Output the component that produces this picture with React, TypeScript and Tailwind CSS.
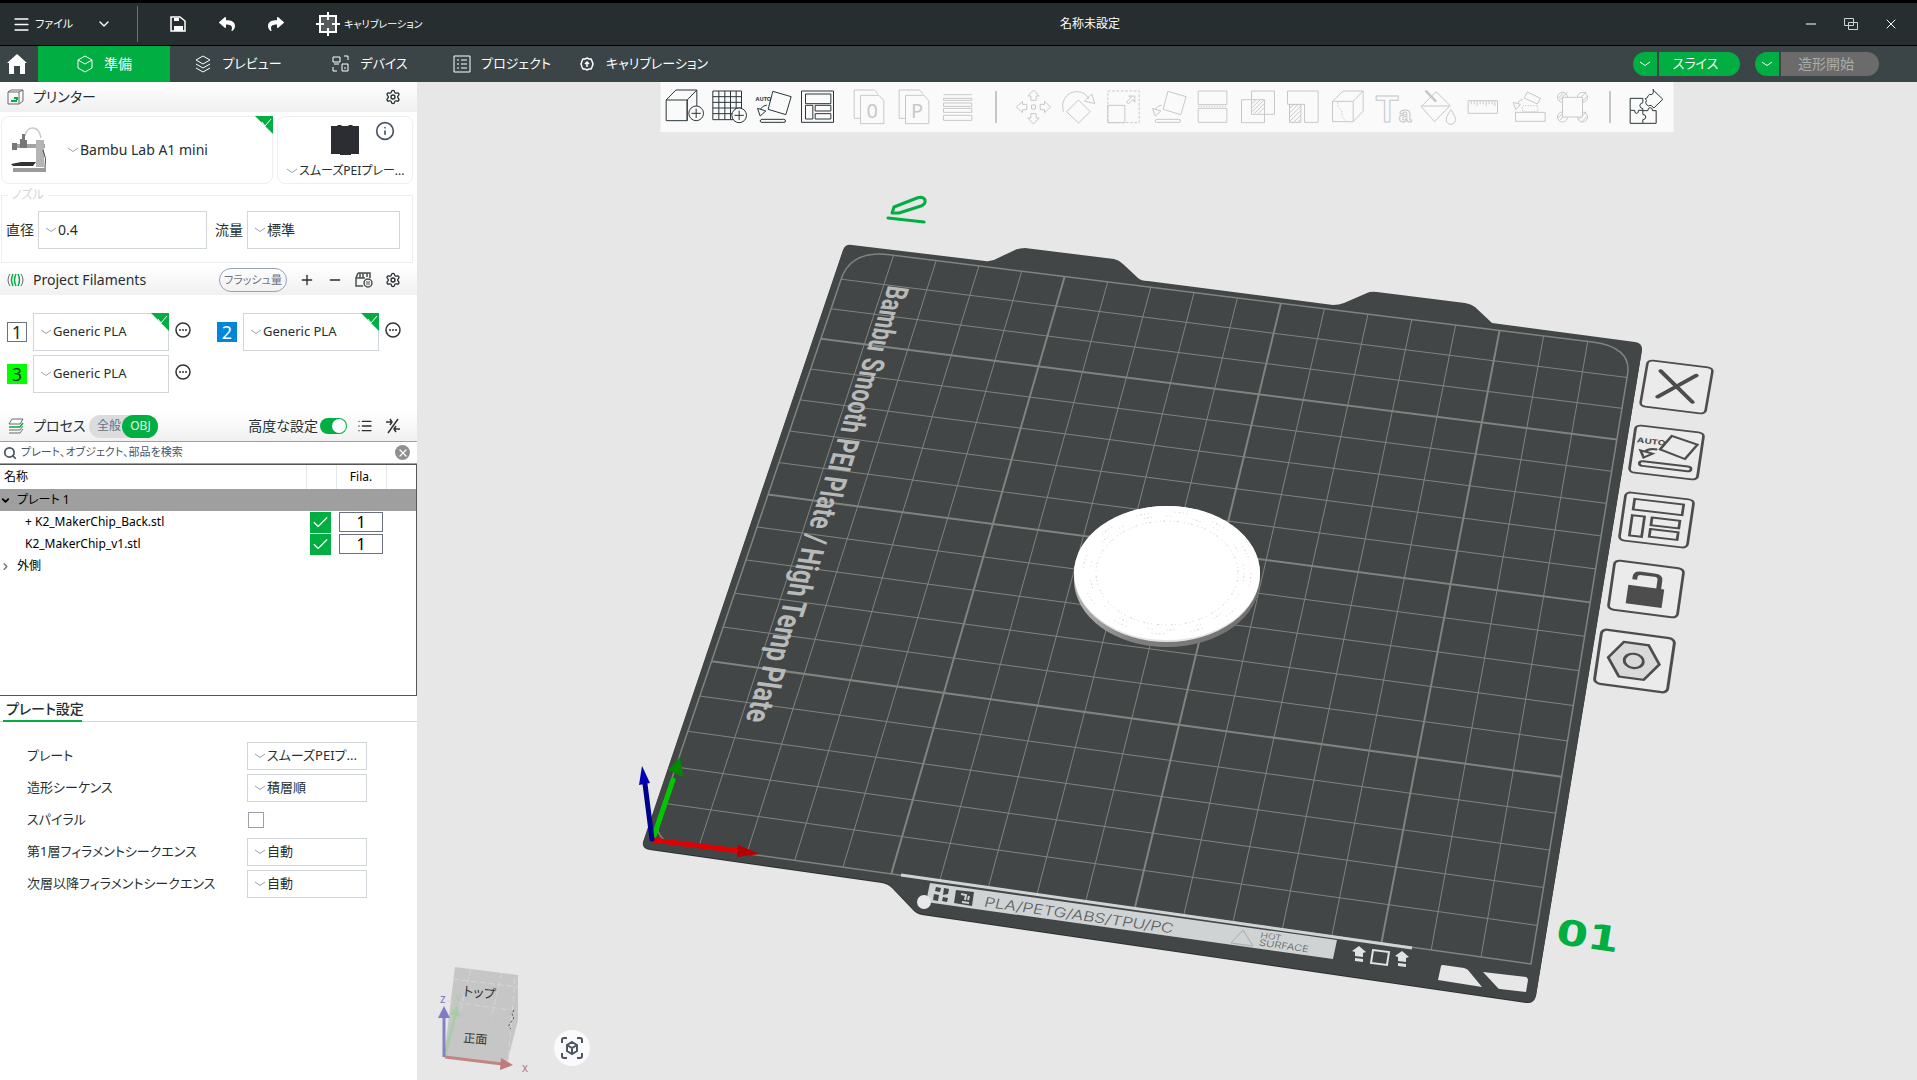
import { useState } from 'react';
import type { ReactNode } from 'react';
import { Check, ChevronDown, ChevronRight, Info, List, Menu, Minus, Plus, Search, Settings, X } from 'lucide-react';
import { FaReply, FaShare } from 'react-icons/fa';

type Point = [number, number];

// Corners of the 180 x 180 mm print bed in view coordinates
const BED = 180;
const FRONT_LEFT: Point = [651, 840];
const FRONT_RIGHT: Point = [1531, 964];
const BACK_RIGHT: Point = [1632, 347];
const BACK_LEFT: Point = [851, 250];

// Perspective mapping from bed millimetres to the view
function createProjection(p0: Point, p1: Point, p2: Point, p3: Point) {
  const dx1 = p1[0] - p2[0];
  const dy1 = p1[1] - p2[1];
  const dx2 = p3[0] - p2[0];
  const dy2 = p3[1] - p2[1];
  const sx = p0[0] - p1[0] + p2[0] - p3[0];
  const sy = p0[1] - p1[1] + p2[1] - p3[1];
  const den = dx1 * dy2 - dx2 * dy1;
  const g = (sx * dy2 - dx2 * sy) / den;
  const h = (dx1 * sy - sx * dy1) / den;

  return (x: number, y: number): Point => {
    const u = x / BED;
    const v = y / BED;
    const w = g * u + h * v + 1;
    return [
      ((p1[0] - p0[0] + g * p1[0]) * u + (p3[0] - p0[0] + h * p3[0]) * v + p0[0]) / w,
      ((p1[1] - p0[1] + g * p1[1]) * u + (p3[1] - p0[1] + h * p3[1]) * v + p0[1]) / w,
    ];
  };
}

const project = createProjection(FRONT_LEFT, FRONT_RIGHT, BACK_RIGHT, BACK_LEFT);

function line(x1: number, y1: number, x2: number, y2: number) {
  return `M${project(x1, y1).join(' ')}L${project(x2, y2).join(' ')}`;
}

// Local frame of the bed at a point, four units to the millimetre
function bedMatrix(x: number, y: number, down = false) {
  const o = project(x, y);
  const right = down ? project(x, y - 1) : project(x + 1, y);
  const up = down ? project(x + 1, y) : project(x, y + 1);
  const values = [right[0] - o[0], right[1] - o[1], o[0] - up[0], o[1] - up[1]].map((n) => n / 4);
  return `matrix(${[...values, o[0], o[1]].join(' ')})`;
}

function Chevron({ className = 'text-gray-400' }: { className?: string }) {
  return (
    <svg viewBox="0 0 12 6" className={`h-[6px] w-3 shrink-0 ${className}`} fill="none" stroke="currentColor">
      <path d="M1 1l5 3.5L11 1" />
    </svg>
  );
}

interface DropdownProps {
  id: string;
  label: string;
  value: string;
  className?: string;
}

function Dropdown({ id, label, value, className = '' }: DropdownProps) {
  return (
    <div className={`flex items-center gap-px ${className}`}>
      <Chevron />
      <select id={id} aria-label={label} className="min-w-0 flex-1 appearance-none bg-transparent outline-none">
        <option>{value}</option>
      </select>
    </div>
  );
}

function CornerBadge() {
  return (
    <svg viewBox="0 0 18 18" className="absolute -top-px -right-px size-[18px]">
      <path d="M0 0h18v18z" fill="#00ae42" />
      <path d="M7 6l3 4 6-7" fill="none" stroke="#fff" />
    </svg>
  );
}

function TitleBar() {
  return (
    <header className="flex h-[46px] shrink-0 items-center border-t-[3px] border-b border-black bg-[#262e30] text-white">
      <div className="flex w-[137px] items-center">
        <button className="ml-3 flex items-center gap-1 text-[11px]">
          <Menu className="size-[19px]" strokeWidth={2} />
          ファイル
        </button>
        <button aria-label="メニューを開く" className="ml-auto pr-[25px]">
          <ChevronDown className="size-4" strokeWidth={2} />
        </button>
      </div>
      <div className="h-9 w-px bg-gray-500" />
      <div className="flex w-[490px] items-center pl-8">
        <button aria-label="保存" className="w-[49px]">
          <svg viewBox="0 0 16 16" className="size-4" fill="none" stroke="#fff" strokeWidth="1.5">
            <path d="M1 1h9l5 4v10H1z" />
            <path d="M4 2h5v3H4zM4 10h9v5H4z" fill="#fff" stroke="none" />
          </svg>
        </button>
        <button aria-label="元に戻す" className="w-[49px]">
          <FaReply className="size-4" />
        </button>
        <button aria-label="やり直す" className="w-12">
          <FaShare className="size-4" />
        </button>
        <button className="flex items-center gap-1 text-[10px]">
          <svg viewBox="0 0 24 24" className="size-6" fill="none" stroke="#fff" strokeWidth="2">
            <rect x="4" y="4" width="16" height="16" fill="#555b5c" />
            <path d="M12 0v8M12 16v8M0 12h8M16 12h8" />
          </svg>
          キャリブレーション
        </button>
      </div>
      <h1 className="flex-1 pl-[432px] text-xs">名称未設定</h1>
      <div className="flex items-center gap-6 pr-[18px]">
        <button aria-label="最小化">
          <Minus className="size-4" strokeWidth={1.5} />
        </button>
        <button aria-label="元のサイズに戻す">
          <svg viewBox="0 0 16 14" className="h-[14px] w-4" fill="none" stroke="#cfd3d4">
            <path d="M1.5 1.5h9v7h-9zM5.5 5.5h9v7h-9z" />
          </svg>
        </button>
        <button aria-label="閉じる">
          <X className="size-4" strokeWidth={1.5} />
        </button>
      </div>
    </header>
  );
}

const TABS: { name: string; icon: ReactNode }[] = [
  {
    name: '準備',
    icon: <path d="M9 1l7 4v8l-7 4-7-4V5zM2 5l7 4 7-4" />,
  },
  {
    name: 'プレビュー',
    icon: <path d="M9 1l7 4-7 4-7-4zM2 9l7 4 7-4M2 13l7 4 7-4" />,
  },
  {
    name: 'デバイス',
    icon: <path d="M1 2h7v5H1zM2 9h5M12 1h4v4M1 12v4h4M10 9h6v7h-6zM13 12v2" />,
  },
  {
    name: 'プロジェクト',
    icon: <path d="M1 1h16v16H1zM4 5h2M8 5h6M4 9h2M8 9h6M4 13h2M8 13h6" />,
  },
  {
    name: 'キャリブレーション',
    icon: (
      <path
        d="M9 3l2 1h2l1 2 1 3-1 3-1 2h-2l-2 1-2-1H5l-1-2-1-3 1-3 1-2h2zM9 12V7M7 9l2-2 2 2"
        strokeWidth="1.5"
      />
    ),
  },
];

function TabBar() {
  return (
    <nav className="flex h-9 shrink-0 items-center bg-[#3b4446] text-[13px] text-white">
      <button aria-label="ホーム" className="flex w-[38px] justify-center pr-1">
        <svg viewBox="0 0 20 20" className="size-5" fill="#fff">
          <path d="M10 0l10 9h-2v11h-5v-8H7v8H2V9H0z" />
        </svg>
      </button>
      {TABS.map((tab, i) => (
        <button
          key={tab.name}
          className={`flex h-full min-w-[132px] items-center justify-center gap-[10px] px-2 ${i === 0 ? 'bg-[#00ae42] text-sm' : 'pl-3'}`}
        >
          <svg viewBox="0 0 18 18" className="size-[18px] shrink-0" fill="none" stroke="#fff">
            {tab.icon}
          </svg>
          {tab.name}
        </button>
      ))}
      <div className="ml-auto flex h-6 gap-[15px] pr-[38px]">
        <div className="flex gap-[2px]">
          <button aria-label="スライスのオプション" className="flex w-6 items-center justify-center rounded-l-full bg-[#00ae42]">
            <Chevron className="text-white" />
          </button>
          <button className="w-[81px] rounded-r-full bg-[#00ae42] pr-2">スライス</button>
        </div>
        <div className="flex gap-[2px]">
          <button aria-label="造形のオプション" className="flex w-6 items-center justify-center rounded-l-full bg-[#00ae42]">
            <Chevron className="text-white" />
          </button>
          <button className="w-[98px] rounded-r-full bg-[#6b6b6b] pr-2 text-sm text-[#acacac]">造形開始</button>
        </div>
      </div>
    </nav>
  );
}

function SectionHeader({ icon, title, children }: { icon: ReactNode; title: string; children?: ReactNode }) {
  return (
    <div className="flex h-[30px] shrink-0 items-center bg-gradient-to-b from-white to-[#f0f0f0] pr-4 pl-[7px] text-sm">
      <svg viewBox="0 0 18 16" className="mr-2 h-4 w-[18px]" fill="none" stroke="#6b6b6b">
        {icon}
      </svg>
      <h2>{title}</h2>
      {children}
    </div>
  );
}

function PrinterSection() {
  return (
    <section>
      <SectionHeader
        title="プリンター"
        icon={
          <>
            <path d="M1 3h11v12H1zM1 3l3-2h12v11l-4 3M12 3l4-2" />
            <path d="M4 12h6M7 9h3v2" stroke="#00ae42" strokeWidth="2" />
          </>
        }
      >
        <button aria-label="プリンター設定" className="ml-auto">
          <Settings className="size-4" strokeWidth={2} />
        </button>
      </SectionHeader>

      <div className="flex gap-1 pt-1 pr-1 pl-px">
        <div className="relative flex h-[68px] w-[272px] shrink-0 items-center rounded-lg border border-[#eee] pl-[9px]">
          <svg viewBox="0 0 36 48" className="h-12 w-9">
            <path d="M14 10C16-1 28-1 30 12" fill="none" stroke="#c8c8c8" strokeWidth="1.5" />
            <path d="M1 18h33v4H1z" fill="#a3a3a3" />
            <path d="M11 8h3v6h2v8H9v-9h2zM1 17h5v7H1z" fill="#777" />
            <path d="M25 14h8v27h-8z" fill="#b4b4b4" />
            <path d="M32 24q4 8 2 18" fill="none" stroke="#444" />
            <path d="M0 38l10-2h15l-3 4H2z" fill="#333" />
            <path d="M2 42h33v4H2z" fill="#9a9a9a" />
          </svg>
          <Dropdown id="printer" label="プリンター" value="Bambu Lab A1 mini" className="ml-5 flex-1 text-sm" />
          <CornerBadge />
        </div>
        <div className="relative flex h-[68px] min-w-0 flex-1 flex-col items-center justify-between rounded-lg border border-[#eee] pt-2 pb-1">
          <svg viewBox="0 0 28 31" className="h-[31px] w-7">
            <path d="M0 1h6l1-1h3l1 1h6l1-1h3l1 1h6v28h-8v1H9v-1H0z" fill="#2c2d33" />
          </svg>
          <button aria-label="プレート情報" className="absolute top-1 right-[17px]">
            <Info className="size-5 text-gray-600" strokeWidth={2} />
          </button>
          <Dropdown id="bed" label="ベッドの種類" value="スムーズPEIプレー..." className="w-full pl-2 text-xs" />
        </div>
      </div>

      <fieldset className="mt-[3px] mr-1 ml-px flex h-[76px] items-center border border-[#eee] pb-[6px] pl-1 text-sm">
        <legend className="ml-[2px] px-1 text-xs text-gray-300">ノズル</legend>
        <label htmlFor="diameter" className="w-8">直径</label>
        <Dropdown id="diameter" label="直径" value="0.4" className="h-[38px] w-[169px] border border-gray-300 pl-1.5" />
        <label htmlFor="flow" className="ml-2 w-8">流量</label>
        <Dropdown id="flow" label="流量" value="標準" className="h-[38px] w-[153px] border border-gray-300 pl-1.5" />
      </fieldset>
    </section>
  );
}

const FILAMENTS = [
  { id: 1, name: 'Generic PLA', swatch: 'border border-gray-500 bg-white', verified: true },
  { id: 2, name: 'Generic PLA', swatch: 'bg-[#0086d6] text-white', verified: true },
  { id: 3, name: 'Generic PLA', swatch: 'bg-[#00ff00]', verified: false },
];

function FilamentSection() {
  return (
    <section className="mt-[2px]">
      <SectionHeader
        title="Project Filaments"
        icon={
          <>
            <path d="M3 2q-4 6 0 12M14 2q4 6 0 12" />
            <path d="M6 2q-3 6 0 12M9 2q-3 6 0 12M11 2q3 6 0 12" stroke="#00ae42" strokeWidth="1.5" />
          </>
        }
      >
        <div className="ml-auto flex items-center gap-3">
          <button className="h-6 w-[68px] rounded-full border border-gray-400 text-[11px] text-gray-500">フラッシュ量</button>
          <button aria-label="フィラメントを追加">
            <Plus className="size-4" strokeWidth={2} />
          </button>
          <button aria-label="フィラメントを削除">
            <Minus className="size-4" strokeWidth={2} />
          </button>
          <button aria-label="AMSと同期">
            <svg viewBox="0 0 18 16" className="h-4 w-[18px]" fill="none" stroke="#4a4f50" strokeWidth="1.5">
              <path d="M3 1h12v5M3 1L1 6v8h7M5 1v5M8 1v5M12 1v4M1 6h9" />
              <circle cx="13" cy="11" r="4" />
              <path d="M11 10h4M15 12h-4" strokeWidth="1" />
            </svg>
          </button>
          <button aria-label="フィラメント設定">
            <Settings className="size-4" strokeWidth={2} />
          </button>
        </div>
      </SectionHeader>

      <ul className="grid grid-cols-[210px_1fr] gap-y-1 pt-[18px] pb-[18px] pl-[7px]">
        {FILAMENTS.map((filament) => (
          <li key={filament.id} className="flex items-center">
            <span className={`flex size-5 items-center justify-center text-lg ${filament.swatch}`}>{filament.id}</span>
            <div className="relative ml-1.5 h-[38px] w-[136px] border border-gray-300 text-[13px]">
              <Dropdown
                id={`filament-${filament.id}`}
                label={`フィラメント ${filament.id}`}
                value={filament.name}
                className="h-full pl-1.5"
              />
              {filament.verified && <CornerBadge />}
            </div>
            <button aria-label="その他" className="ml-1.5 pb-1">
              <svg viewBox="0 0 16 16" className="size-4" fill="none" stroke="#333">
                <circle cx="8" cy="8" r="7" strokeWidth="1.5" />
                <path d="M4 8h2M7 8h2M10 8h2" strokeWidth="1.5" />
              </svg>
            </button>
          </li>
        ))}
      </ul>
    </section>
  );
}

const OBJECTS = ['+ K2_MakerChip_Back.stl', 'K2_MakerChip_v1.stl'];

function ProcessSection() {
  const [advanced, setAdvanced] = useState(true);

  return (
    <section>
      <SectionHeader
        title="プロセス"
        icon={
          <>
            <path d="M5 1h11l-3 5H2z" />
            <path d="M16 5l-3 4H2" stroke="#00ae42" strokeWidth="1.5" />
            <path d="M2 12h11l3-4M2 15h11l3-4" />
          </>
        }
      >
        <div className="ml-1 flex h-[23px] items-center rounded-full bg-[#dcdcdc] text-xs">
          <button className="w-[33px] pl-1.5 text-gray-500">全般</button>
          <button className="h-full w-9 rounded-full bg-[#00ae42] text-[#e8f7ed]">OBJ</button>
        </div>
        <label htmlFor="advanced" className="ml-auto text-sm">高度な設定</label>
        <input
          id="advanced"
          type="checkbox"
          role="switch"
          checked={advanced}
          onChange={(e) => setAdvanced(e.target.checked)}
          className="mx-[2px] h-4 w-[27px] appearance-none rounded-full bg-gray-400 before:block before:size-3.5 before:translate-x-px before:translate-y-px before:rounded-full before:bg-white checked:bg-[#00ae42] checked:before:translate-x-3"
        />
        <button aria-label="リスト表示" className="ml-2">
          <List className="size-4" strokeWidth={2} />
        </button>
        <button aria-label="比較" className="ml-3">
          <svg viewBox="0 0 16 16" className="size-4" fill="none" stroke="#333" strokeWidth="1.5">
            <path d="M13 1L3 15M1 4h6M5 1l2 3-2 3M15 11H9M11 8l-2 3 2 3" />
          </svg>
        </button>
      </SectionHeader>

      <div className="flex h-[23px] items-center border-y border-gray-400 pr-[7px] pl-[3px]">
        <Search className="size-[14px] text-gray-600" strokeWidth={3} />
        <input
          type="search"
          aria-label="検索"
          placeholder="プレート、オブジェクト、部品を検索"
          className="ml-1 min-w-0 flex-1 text-[11px] outline-none placeholder:text-gray-600"
        />
        <button aria-label="クリア" className="flex size-[15px] items-center justify-center rounded-full bg-[#8f8f8f] text-white">
          <X className="size-3" strokeWidth={2.5} />
        </button>
      </div>

      <div className="h-[232px] border border-l-0 border-[#555] text-xs text-black">
        <table className="w-full table-fixed border-collapse">
          <colgroup>
            <col />
            <col className="w-[30px]" />
            <col className="w-[50px]" />
            <col className="w-[30px]" />
          </colgroup>
          <thead>
            <tr className="h-6">
              <th className="pl-1 text-left font-normal">名称</th>
              <th className="border-l border-gray-200" />
              <th className="border-x border-gray-200 font-normal">Fila.</th>
              <th />
            </tr>
          </thead>
          <tbody>
            <tr className="h-[22px] bg-[#9f9f9f]">
              <td colSpan={4}>
                <button className="flex items-center gap-[6px]">
                  <ChevronDown className="size-[11px]" strokeWidth={4} />
                  プレート 1
                </button>
              </td>
            </tr>
            {OBJECTS.map((name) => (
              <tr key={name} className="h-[22px]">
                <td className="pl-[25px]">{name}</td>
                <td className="pl-1">
                  <label className="relative block size-[21px] bg-[#00ae42]">
                    <input type="checkbox" defaultChecked aria-label={name} className="peer absolute inset-0 appearance-none" />
                    <Check className="absolute inset-0 hidden size-[21px] p-px text-white peer-checked:block" strokeWidth={1.5} />
                  </label>
                </td>
                <td className="px-[3px]">
                  <button className="block h-5 w-11 border border-gray-500 text-base leading-[18px]">1</button>
                </td>
                <td />
              </tr>
            ))}
            <tr className="h-[22px]">
              <td colSpan={4}>
                <button className="flex items-center gap-[6px]">
                  <ChevronRight className="size-[11px] text-gray-500" strokeWidth={3} />
                  外側
                </button>
              </td>
            </tr>
          </tbody>
        </table>
      </div>
    </section>
  );
}

const PLATE_SETTINGS = [
  { id: 'plate-type', label: 'プレート', value: 'スムーズPEIプ...' },
  { id: 'sequence', label: '造形シーケンス', value: '積層順' },
  { id: 'spiral', label: 'スパイラル', value: null },
  { id: 'first-layer', label: '第1層フィラメントシークエンス', value: '自動' },
  { id: 'other-layers', label: '次層以降フィラメントシークエンス', value: '自動' },
];

function PlateSettings() {
  return (
    <section>
      <div className="flex h-[26px] border-b border-gray-300 pl-[3px]">
        <h2 className="-mb-px w-[79px] border-b-2 border-[#00ae42] pt-[3px] pl-[3px] text-sm font-medium whitespace-nowrap">プレート設定</h2>
      </div>
      <div className="flex flex-col gap-1 pt-5 pl-[27px] text-[13px]">
        {PLATE_SETTINGS.map((setting) => (
          <div key={setting.id} className="flex h-7 items-center">
            <label htmlFor={setting.id} className="w-[220px]">{setting.label}</label>
            {setting.value ? (
              <Dropdown
                id={setting.id}
                label={setting.label}
                value={setting.value}
                className="h-7 w-[120px] border border-gray-300 pl-1.5"
              />
            ) : (
              <input id={setting.id} type="checkbox" className="ml-px size-4 appearance-none border border-gray-400 checked:bg-[#00ae42]" />
            )}
          </div>
        ))}
      </div>
    </section>
  );
}

const UPRIGHT_ARROW = 'M57 9l17 18h-9v13H49V27h-9z';
const TILTED_PART = 'M55 13l55 16-16 54-53-16zM22 97h66q5 0 5 5t-5 4H22q-5 0-5-4t5-5zM9 64l8 23 17-15zM18 66q6-10 19-12';
const PAGE_PAIR = 'M36 94H17V9h61l12 13M36 25h55l15 16v69H36z';

interface Tool {
  label: string;
  drawing: ReactNode;
}

const ADD_TOOLS: Tool[] = [
  {
    label: '追加',
    drawing: (
      <>
        <path d="M5 39h63v62H5zM5 39L34 9h63L68 39v62M97 9v48" />
        <circle cx="95" cy="79" r="22" fill="#fafafa" />
        <path d="M95 65v28M81 79h28" />
      </>
    ),
  },
  {
    label: 'プレートを追加',
    drawing: (
      <>
        <path d="M10 12h86v86H10zM28 12v86M46 12v86M63 12v86M80 12v86M10 29h86M10 46h86M10 63h86M10 80h86" />
        <circle cx="89" cy="85" r="22" fill="#fafafa" />
        <path d="M89 71v28M75 85h28" />
      </>
    ),
  },
  {
    label: '自動配向',
    drawing: (
      <>
        <path d={TILTED_PART} />
        <text x="3" y="41" fontSize="17" fontWeight="700" fill="currentColor" stroke="none">AUTO</text>
      </>
    ),
  },
  {
    label: '自動配置',
    drawing: <path d="M6 12h96v94H6zM18 21h76v29H18zM18 55h22v41H18zM47 55h47v17H47zM47 80h47v16H47z" />,
  },
];

const OBJECT_TOOLS: Tool[] = [
  {
    label: 'オブジェクトに分割',
    drawing: (
      <>
        <path d={PAGE_PAIR} />
        <text x="71" y="92" fontSize="60" textAnchor="middle" fill="currentColor" stroke="none">0</text>
      </>
    ),
  },
  {
    label: 'パーツに分割',
    drawing: (
      <>
        <path d={PAGE_PAIR} />
        <text x="71" y="92" fontSize="60" textAnchor="middle" fill="currentColor" stroke="none">P</text>
      </>
    ),
  },
  { label: '可変積層ピッチ', drawing: <path d="M15 23h85M15 34h85v6H15zM15 48h85v10H15zM15 64h85v12H15zM15 85h85v15H15z" /> },
];

const EDIT_TOOLS: Tool[] = [
  {
    label: '移動',
    drawing: (
      <>
        <path d="M51 54h12v12H51z" />
        <path d={UPRIGHT_ARROW} />
        <path d={UPRIGHT_ARROW} transform="rotate(90 57 60)" />
        <path d={UPRIGHT_ARROW} transform="rotate(180 57 60)" />
        <path d={UPRIGHT_ARROW} transform="rotate(270 57 60)" />
      </>
    ),
  },
  { label: '回転', drawing: <path d="M57 39l35 35-35 34-36-34zM12 74C2 40 24 13 54 14q24 1 34 22M97 21l9 29-31-8z" /> },
  {
    label: '拡大縮小',
    drawing: (
      <>
        <path d="M10 12h94v95H10z" strokeDasharray="8 5" />
        <path d="M10 55h51v52H10zM66 45l14-14-7-4h18v19l-6-8-13 13z" />
      </>
    ),
  },
  { label: '面を底面にする', drawing: <path d={TILTED_PART} /> },
  {
    label: 'カット',
    drawing: (
      <>
        <path d="M11 12h86v41H11zM11 64h86v42H11z" />
        <path d="M11 58h86" strokeDasharray="4 4" />
      </>
    ),
  },
  {
    label: 'ブーリアン',
    drawing: <path d="M6 38h69v69H6zM36 12h69v70H36zM38 50l12-12M38 62l24-24M38 74l36-36M44 80l30-30M56 80l18-18" />,
  },
  {
    label: 'サポートペイント',
    drawing: (
      <path d="M9 12h92v94H60V52H9zM15 53h34v53H15zM15 65l12-12M15 78l25-25M15 91l34-34M15 104l34-34M27 106l22-22M40 106l9-9" />
    ),
  },
  {
    label: '継ぎ目ペイント',
    drawing: (
      <>
        <path d="M9 43h62v61H9zM9 43l32-31h60L71 43M101 12v60l-30 32" />
        <path d="M25 46v14l12 10v18l12 14" strokeDasharray="4 4" />
      </>
    ),
  },
  {
    label: 'テキスト',
    drawing: (
      <text x="4" y="104" fontSize="112" fontWeight="700" fontFamily="'Liberation Sans', sans-serif">
        T<tspan fontSize="68">a</tspan>
      </text>
    ),
  },
  {
    label: 'カラーペイント',
    drawing: (
      <>
        <path d="M50 14l42 42-47 48L5 59zM5 57h87M94 68q14 20 14 30a14 14 0 0 1-28 0q0-10 14-30z" />
        <path d="M18 11l32 33" strokeWidth="8" />
      </>
    ),
  },
  { label: '測定', drawing: <path d="M11 41h88v38H11zM20 42v10M29 42v10M38 42v15M47 42v10M56 42v10M65 42v15M74 42v10M83 42v10M91 42v15" /> },
  {
    label: '組み立て',
    drawing: (
      <>
        <path d="M18 76h89v27H18zM53 15l40 19-9 17-40-18zM11 46l22 6-14 16zM24 50q6-14 16-12" />
        <path d="M39 56h46v18H39z" strokeDasharray="4 4" />
      </>
    ),
  },
  {
    label: '耳ブリム',
    drawing: (
      <>
        <circle cx="24" cy="31" r="15" />
        <circle cx="84" cy="31" r="15" />
        <circle cx="24" cy="90" r="15" />
        <circle cx="84" cy="90" r="15" />
        <path d="M12 33l14-14M14 40l24-24M72 38l24-24M82 44l16-16M12 92l14-14M16 100l24-24M72 98l24-24M82 104l16-16" />
        <path d="M24 31h60v59H24z" fill="#fafafa" />
      </>
    ),
  },
];

function ToolButton({ tool, disabled }: { tool: Tool; disabled?: boolean }) {
  return (
    <button
      aria-label={tool.label}
      disabled={disabled}
      className="flex h-full w-[45px] items-center justify-center text-[#2a3639] disabled:text-[#c8c8c8]"
    >
      <svg viewBox="0 0 120 120" className="size-10 overflow-visible" fill="none" stroke="currentColor" strokeWidth="3">
        {tool.drawing}
      </svg>
    </button>
  );
}

function CanvasToolbar() {
  return (
    <div className="absolute top-0 left-1/2 flex h-[50px] w-[1013px] -translate-x-1/2 items-center bg-[#fafafa] pl-px">
      {ADD_TOOLS.map((tool) => (
        <ToolButton key={tool.label} tool={tool} />
      ))}
      <div className="w-1" />
      {OBJECT_TOOLS.map((tool) => (
        <ToolButton key={tool.label} tool={tool} disabled />
      ))}
      <div className="mx-[15px] h-8 w-px bg-[#8f9494]" />
      {EDIT_TOOLS.map((tool) => (
        <ToolButton key={tool.label} tool={tool} disabled />
      ))}
      <div className="mx-[13px] h-8 w-px bg-[#8f9494]" />
      <ToolButton
        tool={{
          label: 'アセンブリビュー',
          drawing: (
            <path d="M11 34h38v13q-9 2-9 9t9 9v5H36q0 9-6 9t-6-9H11zM11 71v38h38V98q9-1 9-8t-9-8V71M49 109h40V71H78q0-9-7-9t-7 9H49M80 9l29 28-27 26-8-8q-9 4-14-2t0-13l-4-5q9-2 9-9l4-4q5 3 9-1t2-14z" />
          ),
        }}
      />
    </div>
  );
}

const PLATE_OUTLINE =
  'M843 250Q845 244 852 245L985 261Q992 262 998 258L1015 250Q1019 248 1025 248L1114 259Q1119 260 1123 264L1138 278Q1141 281 1148 281L1333 305Q1339 305 1344 303L1367 293Q1371 291 1377 292L1465 303Q1471 304 1475 307L1492 323L1635 342Q1642 343 1642 349L1536 995Q1534 1003 1526 1002L922 914Q916 913 912 908L892 887Q888 883 882 882L650 849Q642 848 643 842Z';

const PLATE_TITLE: [string, number][] = [
  ['Bambu', 170],
  ['Smooth', 146],
  ['PEI', 120],
  ['Plate', 108],
  ['/', 90],
  ['High', 86],
  ['Temp', 70],
  ['Plate', 51],
];

// Top left, top right and bottom left corner of every button beside the plate
const PLATE_BUTTONS: { corners: [Point, Point, Point]; drawing: ReactNode }[] = [
  {
    corners: [[1648, 360], [1713, 368], [1640, 406]],
    drawing: <path d="M22 20l56 58M77 20L24 76" strokeWidth="7" strokeLinecap="round" />,
  },
  {
    corners: [[1636, 425], [1704, 433], [1629, 472]],
    drawing: (
      <>
        <path d="M54 14l39 12-15 33-38-14zM18 74h66q5 0 5 5t-5 5H18q-5 0-5-5t5-5zM12 52l6 14 12-10zM18 54q6-10 18-8" />
        <text x="5" y="36" fontSize="15" fontWeight="700" fill="#4d4d4d" stroke="none">AUTO</text>
      </>
    ),
  },
  {
    corners: [[1626, 492], [1694, 500], [1619, 540]],
    drawing: <path d="M14 12h72v22H14zM14 46h18v42H14zM43 46h41v16H43zM43 70h41v16H43z" />,
  },
  {
    corners: [[1615, 560], [1684, 569], [1608, 609]],
    drawing: (
      <>
        <path d="M32 34V28q0-8 9-8h18q9 0 9 8v22" strokeWidth="7" />
        <path d="M26 48h48v34H26z" fill="#4d4d4d" />
      </>
    ),
  },
  {
    corners: [[1602, 629], [1675, 639], [1594, 683]],
    drawing: (
      <>
        <path d="M32 18h34l18 32-18 32H32L14 50z" fill="#d9d9d9" />
        <circle cx="49" cy="50" r="13" />
      </>
    ),
  },
];

function quadMatrix([tl, tr, bl]: [Point, Point, Point]) {
  return `matrix(${[tr[0] - tl[0], tr[1] - tl[1], bl[0] - tl[0], bl[1] - tl[1]].map((n) => n / 100).join(' ')} ${tl.join(' ')})`;
}

function BuildPlate() {
  const thin: string[] = [];
  const bold: string[] = [];
  for (let mm = 10; mm < BED; mm += 10) {
    const target = mm % 50 === 0 ? bold : thin;
    target.push(line(mm, 0, mm, BED), line(0, mm, BED, mm));
  }
  const p = (x: number, y: number) => project(x, y).join(' ');

  return (
    <g>
      <path d={PLATE_OUTLINE} fill="#2c2f30" transform="translate(0 1)" />
      <path d={PLATE_OUTLINE} fill="#434647" />
      <g fill="none" stroke="#80847f">
        <path d={thin.join('')} />
        <path d={bold.join('')} strokeWidth="2" />
        <path
          d={`M${p(0, 3)}L${p(0, 170)}Q${p(0, 180)} ${p(9, 180)}L${p(171, 180)}Q${p(180, 180)} ${p(180, 171)}L${p(180, 0)}L${p(5, 0)}Q${p(1, 0)} ${p(0, 5)}`}
          strokeWidth="1.5"
        />
      </g>
      <path d="M901 875L1412 948" stroke="#cfd4d4" strokeWidth="3" />

      <g fill="#b8baba" fontFamily="Roboto, sans-serif" fontWeight="700" fontSize="28">
        {PLATE_TITLE.map(([word, y]) => (
          <text key={y} transform={bedMatrix(11, y, true)}>{word}</text>
        ))}
      </g>

      <path d="M930 883L1337 940L1333 959L926 902Z" fill="#cfd3d4" />
      <circle cx="924" cy="902" r="7" fill="#e8e8e8" />
      <path d="M936 887l5 1-1 4-5-1zM934 894l5 1-1 6-5-1zM944 888l5 1-1 5-5 1zM943 897l5 1-1 4-5-1zM956 890l18 2-2 14-18-3z" fill="#434647" />
      <path d="M961 894l5 1-1 5M969 896l-1 4M962 902l7 1" fill="none" stroke="#cfd3d4" strokeWidth="2" />
      <g fill="#5a5e5f" fontFamily="Inter, sans-serif" fontWeight="300">
        <text transform={bedMatrix(70, -5)} fontSize="14">PLA/PETG/ABS/TPU/PC</text>
        <text transform={bedMatrix(126, -3)} fontSize="8">HOT</text>
        <text transform={bedMatrix(126, -5)} fontSize="9">SURFACE</text>
      </g>
      <path d="M1243 930l10 16-22-3z" fill="none" stroke="#a9adad" />

      <g fill="#e0e3e3">
        <path d="M1359 946l7 6-3 1v4l-8-1v-4l-3-1zM1355 958l8 1v3l-8-1z" />
        <path d="M1402 951l7 6-3 1v4l-8-1v-4l-3-1zM1398 963l8 1v3l-8-1z" />
        <path d="M1441 966Q1441 965 1443 965L1464 968Q1467 969 1468 970L1482 987L1438 980Z" fill="#e7e7e7" />
        <path d="M1483 972L1526 977Q1528 978 1528 980L1526 992L1500 989Q1498 989 1497 987Z" fill="#e7e7e7" />
      </g>
      <path d="M1373 950l16 2-2 13-16-2z" fill="none" stroke="#e0e3e3" strokeWidth="2" />

      <text transform={bedMatrix(184, 6)} fontSize="36" fontWeight="700" fontFamily="DejaVu Sans, sans-serif" fill="#00ae42">
        01
      </text>

      <g fill="none" stroke="#00ae42" strokeWidth="3" strokeLinecap="round" strokeLinejoin="round">
        <path d="M892 213l2-6 23-9q6-2 8 2 1 4-4 6l-22 7z" />
        <path d="M888 218l36 4" />
      </g>

      {PLATE_BUTTONS.map((button, i) => (
        <g key={i} transform={quadMatrix(button.corners)} fill="none" stroke="#4d4d4d" strokeWidth="4">
          <rect width="100" height="100" rx="8" fill="#ebebeb" />
          {button.drawing}
        </g>
      ))}
    </g>
  );
}

function MakerChip() {
  return (
    <g>
      <defs>
        <linearGradient id="chip-side" x1="0" x2="1">
          <stop offset="0" stopColor="#b5b5b5" />
          <stop offset="0.3" stopColor="#808080" />
          <stop offset="1" stopColor="#6f6f6f" />
        </linearGradient>
      </defs>
      <path d="M1074 574v6a93 67 0 0 0 186 0v-6z" fill="url(#chip-side)" />
      <ellipse cx="1167" cy="574" rx="93" ry="68" fill="#e4e4e4" />
      <ellipse cx="1167" cy="573" rx="93" ry="67" fill="#fff" />
      <g fill="none" stroke="#d2d2d2">
        <ellipse cx="1167" cy="573" rx="71" ry="52" strokeDasharray="1 3 1 2 2 5" />
        <ellipse cx="1167" cy="573" rx="77" ry="57" strokeDasharray="1 2 2 2 1 14 1 3 1 22" />
        <ellipse cx="1167" cy="573" rx="84" ry="61" strokeDasharray="1 3 2 2 1 3 1 26" />
      </g>
    </g>
  );
}

function OriginAxes() {
  return (
    <g strokeWidth="5" strokeLinecap="round">
      <path d="M653 839L673 780" stroke="#00c800" />
      <path d="M680 757L683 777L668 770Z" fill="#008a00" />
      <path d="M653 840L740 851" stroke="#e00000" />
      <path d="M738 845L760 854L737 857Z" fill="#b40000" />
      <path d="M652 839L645 784" stroke="#00008c" />
      <path d="M642 766L650 783L639 785Z" fill="#0000b4" />
    </g>
  );
}

function ViewCube() {
  return (
    <g fontFamily="'Noto Sans CJK JP', sans-serif">
      <path d="M455 967L518 975L518 1020L507 1063L444 1057Z" fill="#c6c6c6" />
      <path d="M453 979L518 987M447 1001L510 1010M471 969L460 1012M502 973L491 1018M515 978L508 1062" fill="none" stroke="#d6d6d6" strokeDasharray="6 3" />
      <text x="463" y="996" fontSize="13" fill="#333" transform="rotate(5 463 996)">トップ</text>
      <text x="463" y="1042" fontSize="12" fill="#333" transform="rotate(5 463 1042)">正面</text>
      <path d="M514 1010q-3 4-1 6t-2 6 0 7" fill="none" stroke="#444" strokeDasharray="2 2" />
      <g strokeWidth="3">
        <path d="M445 1056L455 1015" stroke="#a9cbaa" />
        <path d="M457 1005l3 12-10-2z" fill="#a9cbaa" stroke="none" />
        <path d="M444 1057V1018" stroke="#8482c4" />
        <path d="M444 1006l6 12h-12z" fill="#7e7cc2" stroke="none" />
        <path d="M445 1057L502 1064" stroke="#c48482" />
        <path d="M501 1058l12 7-13 5z" fill="#c07c7a" stroke="none" />
      </g>
      <text x="440" y="1003" fontSize="12" fill="#7e7cc2">z</text>
      <text x="455" y="1001" fontSize="12" fill="#a9cbaa">y</text>
      <text x="522" y="1072" fontSize="12" fill="#c07c7a">x</text>
    </g>
  );
}

function Viewport() {
  return (
    <main className="relative min-w-0 flex-1 overflow-hidden bg-[#e7e7e7]">
      <svg viewBox="417 82 1500 998" preserveAspectRatio="xMidYMid slice" className="absolute inset-0 size-full">
        <BuildPlate />
        <MakerChip />
        <OriginAxes />
        <ViewCube />
      </svg>
      <CanvasToolbar />
      <button
        aria-label="ビューを合わせる"
        className="absolute bottom-[14px] left-[137px] flex size-9 items-center justify-center rounded-full bg-[#fafafa] text-gray-600"
      >
        <svg viewBox="0 0 22 22" className="size-[22px]" fill="none" stroke="currentColor" strokeWidth="2">
          <path d="M1 6V3q0-2 2-2h3M16 1h3q2 0 2 2v3M21 16v3q0 2-2 2h-3M6 21H3q-2 0-2-2v-3" />
          <path d="M11 5l5 3v6l-5 3-5-3V8zM6 8l5 3 5-3M11 11v6" />
        </svg>
      </button>
    </main>
  );
}

export default function App() {
  return (
    <div className="flex min-h-screen flex-col font-['Noto_Sans','Noto_Sans_CJK_JP',sans-serif] text-[#262e30] [font-feature-settings:'palt']">
      <TitleBar />
      <TabBar />
      <div className="flex flex-1">
        <aside className="w-[417px] shrink-0 bg-white">
          <PrinterSection />
          <FilamentSection />
          <ProcessSection />
          <PlateSettings />
        </aside>
        <Viewport />
      </div>
    </div>
  );
}
